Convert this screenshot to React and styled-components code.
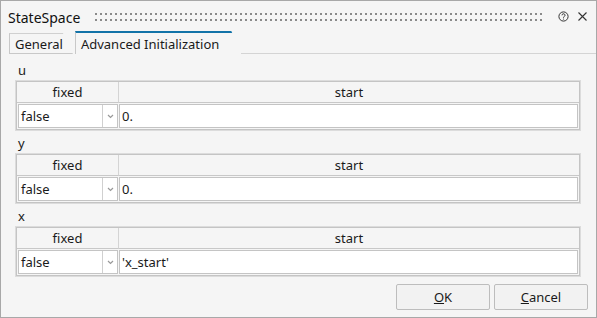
import React from 'react';
import styled, { createGlobalStyle } from 'styled-components';

const GlobalStyle = createGlobalStyle`
  html, body { margin: 0; padding: 0; background: #f5f5f5; }
  body { font-family: "Noto Sans", "Liberation Sans", sans-serif; font-size: 12px; color: #1a1a1a; }
`;

const sections = [
  { name: 'u', start: '0.' },
  { name: 'y', start: '0.' },
  { name: 'x', start: "'x_start'" },
];

export default function App() {
  return (
    <Window>
      <GlobalStyle />
      <TitleBar>
        <Title>StateSpace</Title>
        <Grip />
        <TitleIcons>
          <svg width="11" height="11" viewBox="0 0 11 11">
            <circle cx="5.5" cy="5.5" r="4.6" fill="none" stroke="#333" strokeWidth="1" />
            <path d="M4 4.3a1.5 1.5 0 1 1 2.2 1.3c-.5.3-.7.5-.7 1.1" fill="none" stroke="#333" strokeWidth="1" />
            <circle cx="5.5" cy="8" r=".6" fill="#333" />
          </svg>
          <svg width="11" height="11" viewBox="0 0 11 11">
            <path d="M1.5 1.5l8 8M9.5 1.5l-8 8" stroke="#333" strokeWidth="1.1" />
          </svg>
        </TitleIcons>
      </TitleBar>
      <TabStrip>
        <Tab>General</Tab>
        <Tab active>Advanced Initialization</Tab>
        <TabRest />
      </TabStrip>
      <Body>
        {sections.map(s => (
          <Section key={s.name}>
            <Label>{s.name}</Label>
            <Table>
              <HeadRow>
                <HeadCell>fixed</HeadCell>
                <HeadCell>start</HeadCell>
              </HeadRow>
              <DataRow>
                <Combo>
                  <ComboText>false</ComboText>
                  <ComboArrow>
                    <svg width="7" height="5" viewBox="0 0 7 5">
                      <path d="M1 1l2.5 2.5L6 1" fill="none" stroke="#999" strokeWidth="1.2" />
                    </svg>
                  </ComboArrow>
                </Combo>
                <Input>{s.start}</Input>
              </DataRow>
            </Table>
          </Section>
        ))}
      </Body>
      <Footer>
        <Button><u>O</u>K</Button>
        <Button><u>C</u>ancel</Button>
      </Footer>
    </Window>
  );
}

const Window = styled.div`
  width: 597px;
  height: 318px;
  box-sizing: border-box;
  border: 1px solid #a8a8a8;
  background: #f5f5f5;
  display: flex;
  flex-direction: column;
`;

const TitleBar = styled.div`
  height: 30px;
  display: flex;
  align-items: center;
  padding: 0 8px 0 7px;
  gap: 15px;
`;

const Title = styled.div`
  font-size: 14px;
  color: #111;
  padding-top: 3px;
`;

const Grip = styled.div`
  flex: 1;
  height: 8px;
  margin-top: 2px;
  background-image:
    linear-gradient(90deg, #8a8a8a 2px, transparent 2px),
    linear-gradient(#f5f5f5 0, #f5f5f5 0);
  background-size: 5px 2px;
  background-repeat: repeat-x;
  background-position: 0 0, 0 0;
  box-shadow: none;
  position: relative;

  &::after {
    content: '';
    position: absolute;
    left: 0;
    right: 0;
    top: 6px;
    height: 2px;
    background-image: linear-gradient(90deg, #8a8a8a 2px, transparent 2px);
    background-size: 5px 2px;
  }
`;

const TitleIcons = styled.div`
  display: flex;
  gap: 8px;
  align-items: center;
`;

const TabStrip = styled.div`
  display: flex;
  align-items: flex-end;
  height: 23px;
  padding-left: 8px;
`;

const Tab = styled.div`
  position: relative;
  height: ${p => (p.active ? '23px' : '21px')};
  box-sizing: border-box;
  padding: 0 ${p => (p.active ? '22px' : '10px')} 0 5px;
  display: flex;
  align-items: center;
  font-size: 13px;
  color: #1a1a1a;
  border-left: 1px solid #c8c8c8;
  border-top: ${p => (p.active ? '2px solid #1273a8' : '1px solid #d0d0d0')};
  border-bottom: ${p => (p.active ? 'none' : '1px solid #c8c8c8')};
  background: #f5f5f5;
  clip-path: polygon(0 0, calc(100% - 10px) 0, 100% 100%, 0 100%);
  margin-right: ${p => (p.active ? '0' : '2px')};

  &::after {
    content: '';
    position: absolute;
    right: 5px;
    top: 0;
    width: 1px;
    height: 110%;
    background: #c8c8c8;
    transform: rotate(-24deg);
    transform-origin: top;
  }
`;

const TabRest = styled.div`
  flex: 1;
  border-bottom: 1px solid #d4d4d4;
  margin-left: -8px;
`;

const Body = styled.div`
  flex: 1;
  padding: 8px 16px 0 15px;
  display: flex;
  flex-direction: column;
`;

const Section = styled.div`
  display: flex;
  flex-direction: column;
  margin-bottom: 5px;
`;

const Label = styled.div`
  font-size: 13px;
  height: 19px;
  line-height: 16px;
  padding-left: 2px;
`;

const Table = styled.div`
  border: 1px solid #c4c4c4;
  outline: 1px solid #dcdcdc;
  display: grid;
  grid-template-columns: 102px 1fr;
`;

const HeadRow = styled.div`
  display: contents;
`;

const HeadCell = styled.div`
  height: 20px;
  line-height: 20px;
  text-align: center;
  font-size: 13px;
  border-right: 1px solid #d4d4d4;
  border-bottom: 1px solid #c8c8c8;
  &:last-child { border-right: none; }
`;

const DataRow = styled.div`
  display: contents;
`;

const Combo = styled.div`
  display: flex;
  height: 24px;
  background: #fff;
  border: 1px solid #c4c4c4;
  margin: 1px;
  box-sizing: border-box;
`;

const ComboText = styled.div`
  flex: 1;
  padding-left: 2px;
  line-height: 22px;
  font-size: 13px;
`;

const ComboArrow = styled.div`
  width: 14px;
  border-left: 1px solid #d0d0d0;
  display: flex;
  align-items: center;
  justify-content: center;
`;

const Input = styled.div`
  height: 24px;
  box-sizing: border-box;
  background: #fff;
  border: 1px solid #c4c4c4;
  margin: 1px 1px 1px 0;
  padding-left: 2px;
  line-height: 22px;
  font-size: 13px;
`;

const Footer = styled.div`
  display: flex;
  justify-content: flex-end;
  gap: 4px;
  padding: 0 8px 7px 0;
`;

const Button = styled.div`
  width: 94px;
  height: 26px;
  box-sizing: border-box;
  border: 1px solid #bdbdbd;
  border-radius: 2px;
  background: #f2f2f2;
  display: flex;
  align-items: center;
  justify-content: center;
  font-size: 13px;
  color: #1a1a1a;
`;
